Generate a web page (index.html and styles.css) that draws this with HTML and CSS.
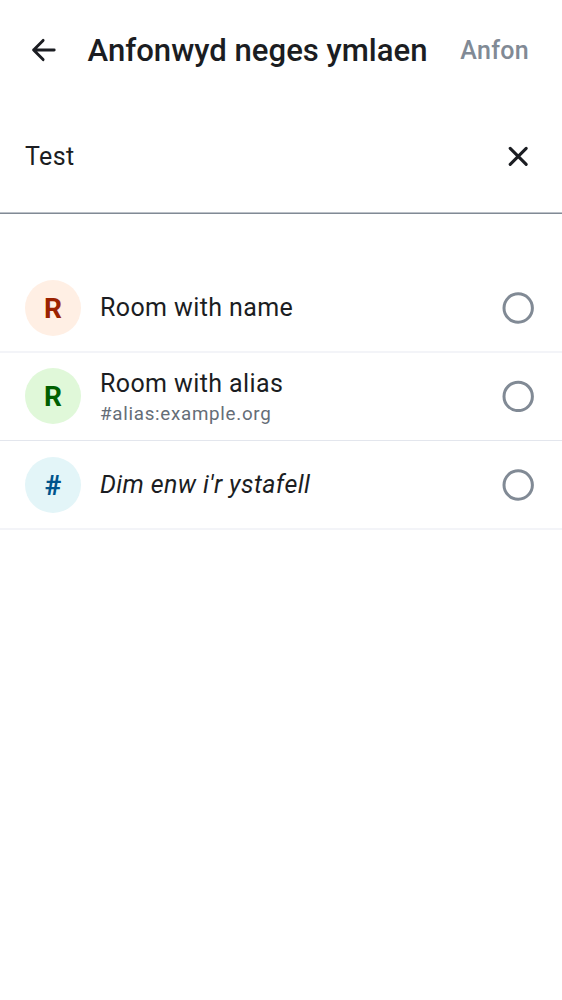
FILE: index.html
```html
<!DOCTYPE html>
<html lang="cy">
<head>
<meta charset="utf-8">
<title>Anfonwyd neges ymlaen</title>
<link rel="stylesheet" href="styles.css">
</head>
<body>
<header class="topbar">
  <svg class="back" width="38" height="38" viewBox="0 0 38 38"><path d="M29.2 19H8.6M18.1 9.4 8.6 19l9.5 9.6"/></svg>
  <h1 class="title">Anfonwyd neges ymlaen</h1>
  <button class="send">Anfon</button>
</header>
<div class="search">
  <span class="query">Test</span>
  <svg class="clear" width="38" height="38" viewBox="0 0 38 38"><path d="m11.2 11.3 16 16M27.2 11.3l-16 16"/></svg>
</div>
<main class="rooms">
  <div class="room">
    <span class="avatar orange">R</span>
    <div class="info"><span class="name">Room with name</span></div>
    <svg class="radio" width="32" height="32" viewBox="0 0 32 32"><circle cx="16.2" cy="16" r="14.2"/></svg>
  </div>
  <div class="room aliased">
    <span class="avatar green">R</span>
    <div class="info"><span class="name">Room with alias</span><span class="alias">#alias:example.org</span></div>
    <svg class="radio" width="32" height="32" viewBox="0 0 32 32"><circle cx="16.2" cy="16.4" r="14.2"/></svg>
  </div>
  <div class="room">
    <span class="avatar blue">#</span>
    <div class="info"><span class="name unnamed">Dim enw i'r ystafell</span></div>
    <svg class="radio" width="32" height="32" viewBox="0 0 32 32"><circle cx="16.2" cy="16" r="14.2"/></svg>
  </div>
</main>
</body>
</html>
```

FILE: styles.css
```css
* { box-sizing: border-box; }
body { margin: 0; background: #fff; color: #1b1d22; font-family: Roboto, sans-serif; }
.topbar { display: flex; align-items: center; height: 100px; padding: 0 33px 0 25px; }
.back { fill: none; stroke: #1b1d22; stroke-width: 2.9; stroke-linecap: round; stroke-linejoin: round; flex: none; }
.title { margin: 0 0 0 24.6px; padding-top: 2px; font-size: 31.1px; font-weight: 500; line-height: 40px; white-space: nowrap; }
.send { margin-left: auto; padding: 2px 0 0; border: 0; background: none; color: #818a95; font: 500 25px/32px Roboto, sans-serif; letter-spacing: .3px; }
.search { display: flex; align-items: center; justify-content: space-between; height: 114px; padding: 0 25px 1px; border-bottom: 1px solid #818a95; box-shadow: inset 0 -1px #bcc1c8; }
.query, .name { font-size: 25px; line-height: 37px; letter-spacing: .4px; }
.clear { fill: none; stroke: #1b1d22; stroke-width: 3.1; stroke-linecap: round; }
.rooms { padding-top: 50px; }
.room { display: flex; align-items: center; height: 89px; padding: 1px 28px 0 25px; border-bottom: 2px solid #f3f4f8; }
.aliased { height: 88px; padding-top: 0; padding-bottom: 1px; border-bottom: 1px solid #e3e6ed; }
.avatar { display: flex; align-items: center; justify-content: center; flex: none; width: 56px; height: 56px; border-radius: 50%; font-size: 28px; font-weight: 700; }
.orange { background: #ffefe4; color: #9b2200; }
.green { background: #e0f8d9; color: #005f00; }
.blue { background: #e3f5f8; color: #00548c; }
.info { display: flex; flex: 1; flex-direction: column; padding: 0 0 1px 19px; }
.aliased .info { padding-bottom: 2px; }
.alias { color: #656d77; font-size: 18.75px; line-height: 24px; letter-spacing: .72px; }
.unnamed { font-style: italic; }
.radio { flex: none; fill: none; stroke: #818a95; stroke-width: 3; }
```
